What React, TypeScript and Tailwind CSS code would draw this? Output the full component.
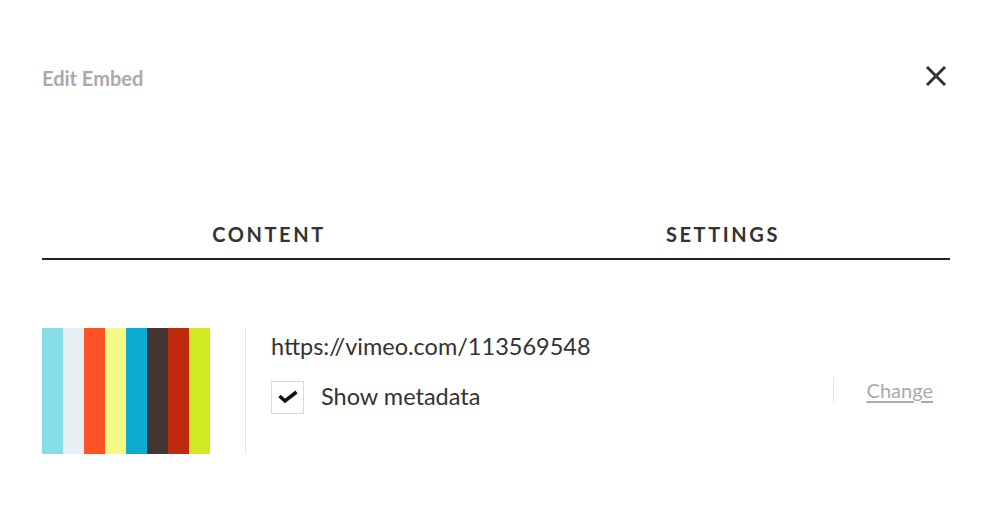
import React from 'react';

const stripes = ['#86dde6', '#e8eff3', '#ff5226', '#f4fb85', '#0cabd1', '#433632', '#bd2a0c', '#d0ea22'];

const CloseIcon = () => (
  <svg width="22" height="22" viewBox="0 0 22 22" fill="none">
    <path d="M2 2L20 20M20 2L2 20" stroke="#333" strokeWidth="3" strokeLinecap="butt" />
  </svg>
);

const CheckIcon = () => (
  <svg width="22" height="14" viewBox="0 0 22 14" fill="none">
    <path d="M2.5 6L8 11L19.5 2" stroke="#111" strokeWidth="3.5" />
  </svg>
);

export default function App() {
  return (
    <div className="w-[999px] h-[506px] bg-white pl-[42px] pr-[49px]" style={{ fontFamily: 'Lato, "Open Sans", sans-serif' }}>
      {/* header */}
      <div className="flex items-center justify-between pt-[65px] h-[90px]">
        <div className="text-[20px] font-bold text-[#aaaaaa] leading-none">Edit Embed</div>
        <div className="mr-[3px] -mt-[4px]">
          <CloseIcon />
        </div>
      </div>

      {/* tabs */}
      <div className="mt-[134px] flex border-b-2 border-[#222]">
        <div className="flex-1 text-center text-[20px] font-bold tracking-[0.13em] text-[#333] pb-[14px] leading-none">CONTENT</div>
        <div className="flex-1 text-center text-[20px] font-bold tracking-[0.13em] text-[#333] pb-[14px] leading-none">SETTINGS</div>
      </div>

      {/* content */}
      <div className="mt-[68px] flex items-stretch">
        <div className="flex w-[168px] h-[126px]">
          {stripes.map((c) => (
            <div key={c} className="flex-1" style={{ backgroundColor: c }} />
          ))}
        </div>
        <div className="ml-[35px] w-px bg-[#e5e5e5]" />
        <div className="ml-[25px] flex-1 flex flex-col">
          <div className="text-[23.5px] text-[#333] leading-none pt-[7px]">https://vimeo.com/113569548</div>
          <div className="mt-[22px] flex items-center">
            <div className="w-[33px] h-[33px] border border-[#d9d9d9] flex items-center justify-center">
              <CheckIcon />
            </div>
            <div className="ml-[17px] text-[23.5px] text-[#333] leading-none">Show metadata</div>
            <div className="ml-auto flex items-center -mt-[14px]">
              <div className="w-px h-[26px] bg-[#e5e5e5]" />
              <a className="ml-[33px] mr-[17px] text-[20px] text-[#aaaaaa] underline underline-offset-[3px] leading-none">Change</a>
            </div>
          </div>
        </div>
      </div>
    </div>
  );
}
